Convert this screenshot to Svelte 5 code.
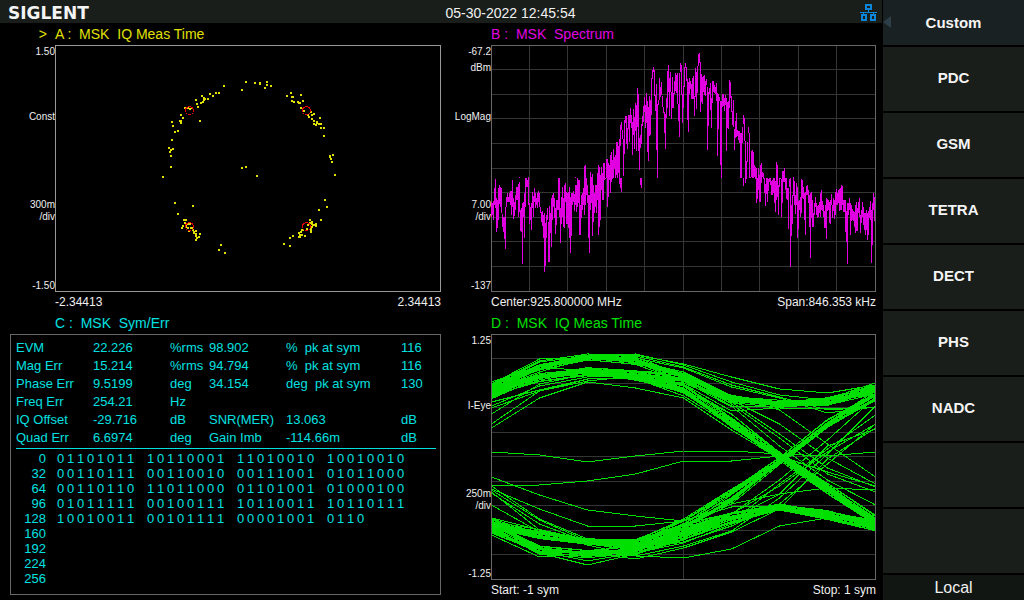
<script lang="ts">
	type Pair = [number, number];

	const MENU = ['PDC', 'GSM', 'TETRA', 'DECT', 'PHS', 'NADC', '', ''];

	const METRICS: string[][] = [
		['EVM', '22.226', '%rms', '98.902', '%  pk at sym', '116'],
		['Mag Err', '15.214', '%rms', '94.794', '%  pk at sym', '116'],
		['Phase Err', '9.5199', 'deg', '34.154', 'deg  pk at sym', '130'],
		['Freq Err', '254.21', 'Hz', '', '', ''],
		['IQ Offset', '-29.716', 'dB', 'SNR(MER)', '13.063', 'dB'],
		['Quad Err', '6.6974', 'deg', 'Gain Imb', '-114.66m', 'dB']
	];

	const SYMBOLS: { offset: number; groups: string[] }[] = [
		{ offset: 0, groups: ['01101011', '10110001', '11010010', '10010010'] },
		{ offset: 32, groups: ['00110111', '00110010', '00111001', '01011000'] },
		{ offset: 64, groups: ['00110110', '11011000', '01101001', '01000100'] },
		{ offset: 96, groups: ['01011111', '00100111', '10110011', '10110111'] },
		{ offset: 128, groups: ['10010011', '00101111', '00001001', '0110'] },
		{ offset: 160, groups: [] },
		{ offset: 192, groups: [] },
		{ offset: 224, groups: [] },
		{ offset: 256, groups: [] }
	];

	function pairs(text: string): Pair[] {
		return text
			.trim()
			.split(/\s+/)
			.map((p) => p.split('-').map(Number) as Pair);
	}

	// constellation samples, x-y
	const DOTS = pairs(`
		168-40 190-36 186-44 199-37 204-37 204-38 211-36 211-39 209-42 215-40
		163-47 160-47 157-50 154-48 152-53 146-50 148-52 148-54 149-53 147-56 145-57 140-54 141-58 142-61
		136-62 134-63 132-62 129-62 125-69 127-72 124-75 125-77 125-75 116-76 117-80 119-86 122-85 116-94
		113-102 115-104 117-103 114-106 115-110 115-121 107-131 144-75 186-122 190-121 201-130
		231-50 235-47 236-51 237-51 245-49 236-55 238-56 242-56 244-57 243-57 247-55 245-62 248-65 255-66
		252-69 253-71 256-69 258-68 256-73 258-75 264-72 261-76 261-77 258-78 260-79 263-78 265-78 265-82
		268-82 268-90 277-109 274-110 274-111 275-113 276-116 279-129 269-154 271-161 263-164 265-174
		119-157 137-160 122-168 128-174 130-174 129-177 131-178 133-178 134-178 130-180 127-180 126-182
		130-181 132-182 133-185 135-182 136-182 137-184 138-186 140-185 138-187 140-188 140-190 141-192
		140-194 143-191 144-188 165-199 163-204 169-207
		254-174 256-176 254-177 252-179 256-178 257-179 260-178 260-180 258-179 256-181 255-182 255-184
		255-186 251-183 247-184 246-184 245-186 243-187 244-189 246-189 249-190 243-191 244-191 237-190
		234-192 228-198 234-200
	`);
	const TARGETS: Pair[] = [
		[134.5, 65.5],
		[251.5, 65.5],
		[134.5, 181.5],
		[251.5, 181.5]
	];

	// spectrum trace, one top-bottom pair for each column
	const SPECTRUM = pairs(`
		157-172 158-170 156-175 143-160 134-163 153-187 155-183 143-175 140-159 142-162
		143-168 169-182 172-187 172-194 162-204 152-162 148-157 152-157 148-157 146-160
		146-170 135-162 153-174 157-171 150-165 142-155 142-155 139-172 137-167 165-186
		163-187 158-219 157-172 148-193 133-162 133-142 135-142 132-160 158-179 162-175
		158-185 147-163 151-172 143-157 148-163 153-160 148-163 146-157 148-162 162-168
		167-177 166-181 170-193 168-227 178-221 170-193 163-175 177-217 161-217 168-188
		153-202 150-175 148-162 153-173 163-189 155-180 155-165 133-165 133-172 163-198
		152-179 142-172 153-182 140-183 138-157 147-179 148-179 147-183 142-193 152-208
		148-191 148-160 146-157 149-166 140-160 140-167 133-162 135-158 135-190 160-190
		150-173 148-165 143-160 121-170 120-160 133-150 140-158 150-193 150-208 127-165
		132-158 129-191 140-177 148-168 140-162 140-168 128-155 120-190 122-182 130-175
		122-145 128-155 118-155 118-135 133-134 114-133 114-162 118-152 120-135 110-148
		107-137 115-134 104-133 112-124 110-133 97-130 97-133 101-128 94-139 80-101
		77-85 85-94 94-131 75-109 71-78 71-99 83-104 70-84 70-97 63-78
		70-83 77-110 64-90 72-104 58-86 60-106 43-82 49-106 93-125 90-103
		79-99 71-81 61-77 52-67 60-83 48-78 56-107 62-116 51-91 55-90
		33-70 25-34 22-27 25-51 50-66 39-105 59-133 55-60 33-55 42-52
		37-50 51-62 62-68 67-88 69-104 53-73 26-63 20-47 33-71 27-47
		47-74 32-63 48-63 36-49 28-46 30-48 28-59 59-76 28-92 18-27
		20-50 49-78 41-63 22-42 18-23 22-36 34-75 37-87 33-49 36-44
		39-54 33-54 31-54 51-71 23-52 27-64 21-48 9-21 8-18 17-67
		29-57 32-59 31-47 30-50 36-51 34-40 42-105 47-81 43-49 38-65
		53-83 36-58 36-47 40-48 42-49 38-56 48-111 49-84 52-56 56-120
		56-133 49-62 49-61 53-66 50-60 53-106 57-83 56-84 35-63 37-53
		51-67 66-80 55-82 84-105 76-93 68-92 85-91 86-95 86-98 88-133
		88-133 82-98 70-79 73-96 96-138 116-134 97-117 82-88 88-133 132-133
		106-132 105-133 107-133 120-132 122-134 123-158 133-154 123-145 130-157 120-157
		118-138 127-132 128-134 133-148 139-161 133-149 133-157 134-146 133-137 133-140
		136-150 135-150 133-148 133-158 136-167 117-155 120-152 140-170 133-142 133-134
		134-172 126-158 126-137 123-137 133-145 133-154 143-155 143-184 134-142 133-222
		160-191 150-179 132-151 136-160 150-169 138-160 142-193 156-184 155-165 152-172
		134-168 135-153 142-154 148-175 147-190 141-150 140-150 145-158 150-182 148-213
		147-173 155-182 168-182 158-170 152-162 158-170 161-173 160-172 157-168 148-172
		145-165 156-166 160-172 166-183 160-183 153-194 154-166 155-165 157-178 155-179
		149-160 160-173 153-166 155-174 147-170 144-160 148-160 145-158 144-166 143-165
		140-165 141-160 155-167 155-167 155-187 166-197 158-219 158-170 153-165 158-190
		160-176 164-175 166-176 167-182 160-188 157-186 163-186 157-168 153-172 170-188
		165-178 157-172 162-180 168-185 168-190 165-185 168-195 166-190 162-173 156-175
		165-218 158-200 148-165 152-176
	`);
	// pieces below the main trace: x, top, bottom
	const DROPS = [
		[28, 132, 133],
		[84, 132, 133],
		[129, 133, 143],
		[130, 133, 147],
		[149, 133, 140],
		[150, 133, 143],
		[252, 133, 141]
	];

	const spectrumPath =
		SPECTRUM.map(([top, bottom], x) => `M${x + 0.5} ${top}V${bottom}`).join('') +
		DROPS.map(([x, top, bottom]) => `M${x + 0.5} ${top}V${bottom}`).join('');

	// eye diagram: bundles between a low and a high level at each sample instant
	const STEP = 48;
	const BUNDLES = [
		{
			count: 14,
			lo: [48, 28, 19, 22, 38, 60, 67, 62, 48],
			hi: [58, 37, 26, 32, 48, 68, 73, 71, 60]
		},
		{
			count: 10,
			lo: [50, 38, 33, 36, 39, 60, 66, 65, 50],
			hi: [64, 49, 42, 46, 50, 71, 74, 74, 60]
		},
		{
			count: 17,
			lo: [52, 38, 33, 36, 49, 79, 117, 148, 180],
			hi: [66, 47, 41, 47, 63, 96, 127, 161, 192]
		},
		{
			count: 16,
			lo: [183, 194, 204, 203, 184, 154, 123, 85, 56],
			hi: [197, 206, 212, 214, 198, 173, 131, 95, 69]
		},
		{
			count: 18,
			lo: [186, 210, 216, 212, 189, 177, 170, 176, 186],
			hi: [201, 221, 224, 221, 205, 188, 177, 188, 200]
		},
		{
			count: 8,
			lo: [184, 195, 204, 206, 194, 179, 168, 176, 186],
			hi: [195, 207, 211, 217, 207, 190, 177, 187, 198]
		}
	];
	const STRAYS = [
		[118, 121, 128, 122, 117, 117, 120, 122, 118],
		[152, 151, 147, 140, 127, 127, 122, 138, 152],
		[143, 161, 176, 182, 187, 170, 160, 154, 156],
		[155, 175, 192, 192, 187, 173, 172, 177, 188],
		[190, 214, 221, 222, 224, 215, 192, 184, 190],
		[50, 25, 24, 21, 30, 43, 55, 59, 51],
		[53, 28, 22, 20, 31, 48, 61, 66, 55],
		[51, 27, 20, 22, 33, 51, 63, 76, 73],
		[55, 33, 23, 24, 34, 53, 64, 79, 73],
		[94, 64, 48, 54, 64, 96, 125, 154, 186],
		[90, 57, 45, 44, 59, 90, 122, 156, 188],
		[80, 50, 40, 44, 56, 80, 120, 152, 184],
		[74, 57, 47, 42, 52, 84, 119, 151, 190],
		[72, 52, 43, 40, 50, 77, 74, 75, 73],
		[68, 56, 45, 44, 47, 73, 72, 71, 60],
		[53, 36, 26, 30, 40, 66, 90, 124, 150],
		[56, 38, 24, 27, 38, 62, 76, 110, 143],
		[54, 34, 36, 37, 42, 68, 100, 134, 153],
		[57, 42, 35, 40, 44, 70, 104, 140, 158],
		[55, 43, 37, 42, 45, 72, 112, 146, 171],
		[152, 185, 205, 215, 208, 192, 170, 130, 90],
		[159, 190, 208, 219, 205, 188, 150, 115, 81],
		[158, 196, 211, 222, 212, 197, 164, 120, 72],
		[171, 198, 210, 216, 206, 185, 160, 112, 95],
		[156, 186, 207, 213, 204, 180, 152, 118, 90],
		[201, 223, 219, 225, 214, 198, 175, 125, 94],
		[198, 219, 231, 220, 206, 180, 146, 106, 63],
		[195, 217, 227, 219, 209, 190, 174, 180, 191]
	];

	let seed = 7;
	function rand() {
		seed = (seed * 16807) % 2147483647;
		return seed / 2147483647;
	}

	function tracePath(levels: number[]) {
		return levels.map((y, i) => `${i ? 'L' : 'M'}${i * STEP + 0.5} ${y.toFixed(1)}`).join('');
	}

	// each line keeps roughly to its own lane inside the bundle
	function bundle({ count, lo, hi }: { count: number; lo: number[]; hi: number[] }) {
		return Array.from({ length: count }, (_, n) => {
			const lane = n / (count - 1);
			return tracePath(lo.map((low, i) => low + (hi[i] - low) * (0.55 * lane + 0.45 * rand())));
		});
	}

	const eyePaths = [...BUNDLES.flatMap(bundle), ...STRAYS.map(tracePath)];

	function gridPath(w: number, h: number, cols: number, rows: number) {
		let d = '';
		for (let c = 1; c < cols; c++) d += `M${Math.floor(((w - 1) * c) / cols) + 0.5} 0V${h}`;
		for (let r = 1; r < rows; r++) d += `M0 ${Math.floor(((h - 1) * r) / rows) + 0.5}H${w}`;
		return d;
	}
</script>

{#snippet scale(top: string[], name: string, div: string, bottom: string)}
	<div class="scale">
		<div class="scale-top">
			{#each top as t (t)}<span>{t}</span>{/each}
		</div>
		<span>{name}</span>
		<div>
			<div>{div}</div>
			<div>/div</div>
		</div>
		<span>{bottom}</span>
	</div>
{/snippet}

<div class="analyzer">
	<main class="screen">
		<header class="topbar">
			<div class="logo">SIGLENT</div>
			<time class="clock">05-30-2022 12:45:54</time>
			<svg class="lan" viewBox="0 0 17 17" role="img" aria-label="LAN">
				<path d="M0 8.5H17M8.5 6V8.5M3.5 8.5V11M13.5 8.5V11" />
				<rect x="6" y="1" width="5" height="4" />
				<rect x="2" y="11" width="4" height="5" />
				<rect x="11" y="11" width="4" height="5" />
			</svg>
		</header>

		<div class="traces">
			<section class="panel yellow">
				<span class="marker">&gt;</span>
				<h2 class="title">A :  MSK  IQ Meas Time</h2>
				{@render scale(['1.50'], 'Const', '300m', '-1.50')}
				<svg class="plot" viewBox="0 0 386 247">
					<rect class="frame bright" x="0.5" y="0.5" width="385" height="246" />
					{#each DOTS as [x, y]}
						<rect class="dot" {x} {y} width="2" height="2" />
					{/each}
					{#each TARGETS as [x, y]}
						<circle class="target" cx={x} cy={y} r="4" />
					{/each}
				</svg>
				<div class="range"><span>-2.34413</span><span>2.34413</span></div>
			</section>

			<section class="panel magenta narrow">
				<h2 class="title">B :  MSK  Spectrum</h2>
				{@render scale(['-67.2', 'dBm'], 'LogMag', '7.00', '-137')}
				<svg class="plot" viewBox="0 0 385 247">
					<path class="grid" d={gridPath(385, 247, 10, 10)} />
					<rect class="frame" x="0.5" y="0.5" width="384" height="246" />
					<path class="trace" d={spectrumPath} />
				</svg>
				<div class="range"><span>Center:925.800000 MHz</span><span>Span:846.353 kHz</span></div>
			</section>

			<section class="panel cyan">
				<h2 class="title">C :  MSK  Sym/Err</h2>
				<div class="results">
					<table class="metrics">
						<tbody>
							{#each METRICS as row (row[0])}
								<tr>
									{#each row as cell}<td>{cell}</td>{/each}
								</tr>
							{/each}
						</tbody>
					</table>
					<table class="symbols">
						<tbody>
							{#each SYMBOLS as row (row.offset)}
								<tr>
									<th scope="row">{row.offset}</th>
									{#each row.groups as group}
										<td>
											<div class="bits">
												{#each group as bit}<span>{bit}</span>{/each}
											</div>
										</td>
									{/each}
								</tr>
							{/each}
						</tbody>
					</table>
				</div>
			</section>

			<section class="panel green narrow">
				<h2 class="title">D :  MSK  IQ Meas Time</h2>
				{@render scale(['1.25'], 'I-Eye', '250m', '-1.25')}
				<svg class="plot" viewBox="0 0 385 246">
					<path class="grid" d={gridPath(385, 246, 2, 10)} />
					{#each eyePaths as d}
						<path class="trace" {d} />
					{/each}
					<rect class="frame" x="0.5" y="0.5" width="384" height="245" />
				</svg>
				<div class="range"><span>Start: -1 sym</span><span>Stop: 1 sym</span></div>
			</section>
		</div>
	</main>

	<nav class="menu">
		<button class="head">
			<svg class="back" viewBox="0 0 8 12" aria-hidden="true"><path d="M8 0V12L0 6Z" /></svg>
			Custom
		</button>
		{#each MENU as item, i (i)}
			<button class="item" disabled={!item} aria-label={item || 'Unused key'}>{item}</button>
		{/each}
		<div class="local">Local</div>
	</nav>
</div>

<style>
	:global(body) {
		margin: 0;
		background: #000;
	}
	.analyzer {
		display: flex;
		min-height: 100vh;
		background: #000;
		color: #f0f0f0;
		font-family: 'Liberation Sans', Arial, sans-serif;
	}
	.screen {
		flex: 1;
		min-width: 0;
	}
	.topbar {
		display: grid;
		grid-template-columns: 1fr auto 1fr;
		align-items: center;
		height: 23px;
		margin-right: 1px;
		padding: 0 5px 0 8px;
		background: #191e1b;
	}
	.logo {
		padding-top: 2px;
		font-family: 'DejaVu Sans', sans-serif;
		font-size: 17px;
		font-weight: 700;
		line-height: 23px;
		color: #f4f4f4;
	}
	.clock {
		font-size: 14px;
		padding-left: 136px;
	}
	.lan {
		width: 17px;
		height: 17px;
		justify-self: end;
		fill: none;
		stroke: #0c86d8;
		stroke-width: 2;
	}
	.lan path {
		stroke-width: 1;
	}
	.traces {
		display: grid;
		grid-template-columns: 441fr 435fr;
		padding-right: 7px;
	}
	.panel {
		display: grid;
		grid-template-columns: 55px minmax(0, 1fr);
		grid-template-rows: 22px auto 20px;
		align-content: start;
	}
	.narrow {
		grid-template-columns: 50px minmax(0, 1fr);
	}
	.yellow {
		--trace: #e0e000;
	}
	.magenta {
		--trace: #e000e0;
	}
	.cyan {
		--trace: #00e0e0;
	}
	.green {
		--trace: #00e000;
	}
	.marker,
	.title {
		color: var(--trace);
		font-size: 14px;
		line-height: 22px;
	}
	.marker {
		padding-right: 8px;
		text-align: right;
	}
	.title {
		grid-column: 2;
		margin: 0;
		font-weight: 400;
		white-space: pre;
	}
	.scale {
		grid-column: 1;
		display: grid;
		grid-template-rows: 65px 88px 1fr auto;
		padding-top: 1px;
		font-size: 10px;
		line-height: 12px;
		text-align: right;
	}
	.scale-top {
		display: flex;
		flex-direction: column;
		gap: 4px;
	}
	.plot {
		display: block;
		width: 100%;
		height: auto;
		shape-rendering: crispEdges;
	}
	.frame {
		fill: none;
		stroke: #686868;
	}
	.bright {
		stroke: #989898;
	}
	.grid {
		stroke: #343636;
	}
	.trace {
		fill: none;
		stroke: var(--trace);
	}
	.dot {
		fill: var(--trace);
	}
	.target {
		fill: none;
		stroke: #f00000;
	}
	.range {
		grid-column: 2;
		display: flex;
		justify-content: space-between;
		font-size: 12px;
		line-height: 20px;
	}
	.results {
		grid-column: 1 / -1;
		margin-left: 10px;
		padding: 4px 4px 8px 5px;
		border: 1px solid #686868;
		color: var(--trace);
		font-size: 13px;
	}
	table {
		border-collapse: separate;
		border-spacing: 0;
	}
	td,
	th {
		padding: 0;
		font-weight: 400;
		white-space: pre;
	}
	.metrics {
		width: 100%;
		padding-bottom: 1px;
		table-layout: fixed;
		border-bottom: 1px solid var(--trace);
		line-height: 18px;
	}
	.metrics td:nth-child(1),
	.metrics td:nth-child(2),
	.metrics td:nth-child(4) {
		width: 77px;
	}
	.metrics td:nth-child(3) {
		width: 39px;
	}
	.metrics td:nth-child(5) {
		width: 115px;
	}
	.symbols {
		margin-top: 2px;
		line-height: 15px;
	}
	.symbols th {
		width: 30px;
		padding-right: 11px;
		text-align: right;
	}
	.symbols td {
		padding-right: 10px;
	}
	.bits {
		display: grid;
		grid-template-columns: repeat(8, 10px);
	}
	.menu {
		display: flex;
		flex-direction: column;
		gap: 2px;
		width: 141px;
	}
	.menu button {
		border: 0;
		padding: 0;
		background: #191e1b;
		color: #f4f4f4;
		font-family: inherit;
		font-size: 15px;
		font-weight: 700;
	}
	.menu .head {
		position: relative;
		height: 45px;
		background: #1a2123;
	}
	.menu .item {
		height: 64px;
		padding-bottom: 4px;
	}
	.back {
		position: absolute;
		left: 0;
		top: 16px;
		width: 8px;
		height: 12px;
		fill: #2c3e48;
	}
	.local {
		flex: 1;
		background: #121613;
		font-size: 16px;
		line-height: 25px;
		text-align: center;
	}
</style>
